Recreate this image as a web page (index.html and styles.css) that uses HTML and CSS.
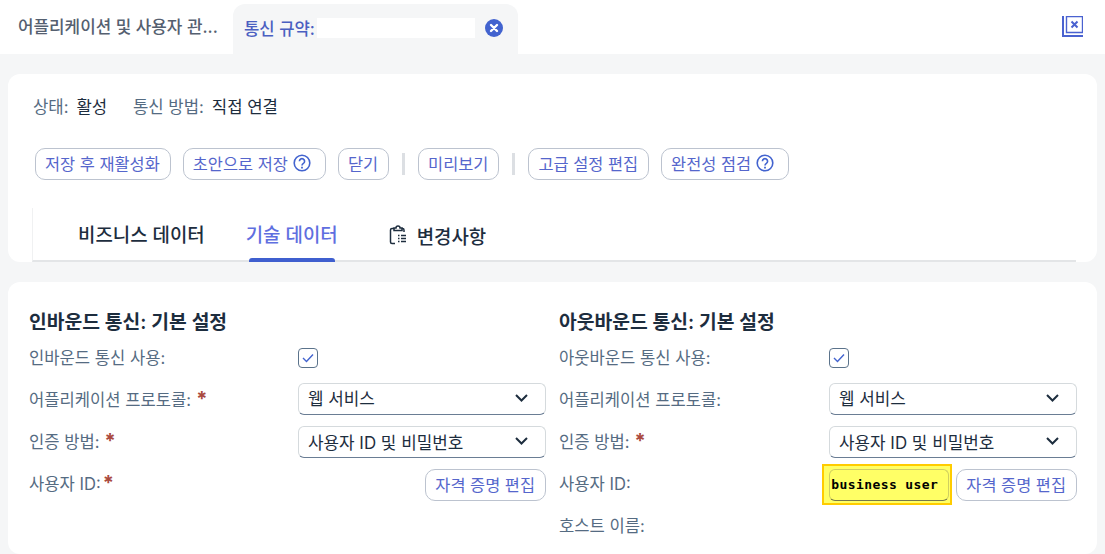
FILE: index.html
```html
<!DOCTYPE html>
<html lang="ko">
  <head>
    <meta charset="utf-8">
    <title>통신 규약</title>
    <link rel="stylesheet" href="styles.css">
  </head>
  <body>
    <div class="topbar">
      <div class="crumb">어플리케이션 및 사용자 관...</div>
      <div class="doc-tab">
        <span class="doc-title">통신 규약:</span>
        <span class="doc-name"></span>
        <svg class="doc-close" width="18" height="18" viewBox="0 0 18 18">
          <circle cx="9" cy="9" r="9" fill="#4263cf"/>
          <path d="M6 6l6 6M12 6l-6 6" stroke="#fff" stroke-width="2.4" stroke-linecap="round"/>
        </svg>
      </div>
      <svg class="exit-icon" width="21" height="21" viewBox="0 0 21 21" fill="none" stroke="#4a62d0">
        <path d="M1 0v20h20" stroke-width="2"/>
        <path d="M4.500 .5h16v16h-16z" stroke-width="1.400"/>
        <path d="M9.500 5.500l6 6M15.500 5.500l-6 6" stroke-width="2"/>
      </svg>
    </div>

    <div class="content">
      <div class="card head-card">
        <div class="status">
          <span class="key">상태:</span><span class="val">활성</span>
          <span class="key key-second">통신 방법:</span><span class="val">직접 연결</span>
        </div>

        <div class="actions">
          <button class="btn">저장 후 재활성화</button>
          <button class="btn btn-help">초안으로 저장
            <svg width="18" height="18" viewBox="0 0 18 18" fill="none" stroke="#4263cf">
              <circle cx="9" cy="9" r="7.800" stroke-width="1.600"/>
              <path d="M6.400 7.200a2.600 2.600 0 1 1 4 2.200c-.9.6-1.400 1-1.400 2" stroke-width="1.600"/>
              <path d="M9 12.800v1.600" stroke-width="1.800"/>
            </svg>
          </button>
          <button class="btn">닫기</button>
          <span class="sep"></span>
          <button class="btn">미리보기</button>
          <span class="sep"></span>
          <button class="btn">고급 설정 편집</button>
          <button class="btn btn-help">완전성 점검
            <svg width="18" height="18" viewBox="0 0 18 18" fill="none" stroke="#4263cf">
              <circle cx="9" cy="9" r="7.800" stroke-width="1.600"/>
              <path d="M6.400 7.200a2.600 2.600 0 1 1 4 2.200c-.9.6-1.400 1-1.400 2" stroke-width="1.600"/>
              <path d="M9 12.800v1.600" stroke-width="1.800"/>
            </svg>
          </button>
        </div>

        <div class="tabs">
          <div class="tab">비즈니스 데이터</div>
          <div class="tab active">기술 데이터</div>
          <div class="tab tab-icon">
            <svg width="18" height="20" viewBox="0 0 18 20" fill="none" stroke="#1d2d3e" stroke-width="1.500">
              <path d="M5 3.500H3a1.500 1.500 0 0 0-1.500 1.500v12A1.500 1.500 0 0 0 3 18.500h3"/>
              <path d="M5 5.500V3h2a2 2 0 0 1 4 0h2v2.500z"/>
              <path d="M13 3.500h.5A1.500 1.500 0 0 1 15 5v2"/>
              <path d="M9 10.500h1.500M9 13.500h1.500M9 16.500h1.500M12 10.500h5M12 13.500h5M12 16.500h5" stroke-width="1.700"/>
            </svg>
            변경사항
          </div>
        </div>
      </div>

      <div class="card form-card">
        <div class="col">
          <h3>인바운드 통신: 기본 설정</h3>
          <div class="row">
            <label>인바운드 통신 사용:</label>
            <span class="check">
              <svg width="12" height="10" viewBox="0 0 12 10" fill="none" stroke="#4263cf" stroke-width="1.400"><path d="M1 5l3.500 3.500L11 1.500"/></svg>
            </span>
          </div>
          <div class="row">
            <label>어플리케이션 프로토콜:<span class="req">*</span></label>
            <div class="select select-first">웹 서비스
              <svg width="13" height="8" viewBox="0 0 13 8" fill="none" stroke="#1d2d3e" stroke-width="2"><path d="M1 1l5.500 5.500L12 1"/></svg>
            </div>
          </div>
          <div class="row">
            <label>인증 방법:<span class="req">*</span></label>
            <div class="select">사용자 ID 및 비밀번호
              <svg width="13" height="8" viewBox="0 0 13 8" fill="none" stroke="#1d2d3e" stroke-width="2"><path d="M1 1l5.500 5.500L12 1"/></svg>
            </div>
          </div>
          <div class="row">
            <label>사용자 ID:<span class="req req-tight">*</span></label>
            <div class="cred"><button class="btn">자격 증명 편집</button></div>
          </div>
        </div>

        <div class="col">
          <h3>아웃바운드 통신: 기본 설정</h3>
          <div class="row">
            <label>아웃바운드 통신 사용:</label>
            <span class="check">
              <svg width="12" height="10" viewBox="0 0 12 10" fill="none" stroke="#4263cf" stroke-width="1.400"><path d="M1 5l3.500 3.500L11 1.500"/></svg>
            </span>
          </div>
          <div class="row">
            <label>어플리케이션 프로토콜:</label>
            <div class="select select-first">웹 서비스
              <svg width="13" height="8" viewBox="0 0 13 8" fill="none" stroke="#1d2d3e" stroke-width="2"><path d="M1 1l5.500 5.500L12 1"/></svg>
            </div>
          </div>
          <div class="row">
            <label>인증 방법:<span class="req">*</span></label>
            <div class="select">사용자 ID 및 비밀번호
              <svg width="13" height="8" viewBox="0 0 13 8" fill="none" stroke="#1d2d3e" stroke-width="2"><path d="M1 1l5.500 5.500L12 1"/></svg>
            </div>
          </div>
          <div class="row">
            <label>사용자 ID:</label>
            <div class="cred">
              <div class="marked"><div class="user-input">business user</div></div>
              <button class="btn">자격 증명 편집</button>
            </div>
          </div>
          <div class="row">
            <label>호스트 이름:</label>
          </div>
        </div>
      </div>
    </div>
  </body>
</html>
```

FILE: styles.css
```css
* {
  box-sizing: border-box;
}

html,
body {
  height: 100%;
}

body {
  margin: 0;
  overflow: hidden;
  background: #f5f6f7;
  color: #1d2d3e;
  font-family: Inter, "Noto Sans CJK KR", sans-serif;
  font-size: 16.5px;
}

.topbar {
  height: 54px;
  background: #fff;
  display: flex;
  align-items: flex-end;
}

.crumb {
  width: 233px;
  height: 50px;
  padding-left: 18px;
  line-height: 47px;
  font-size: 16.9px;
  font-weight: 500;
  color: #556070;
  white-space: nowrap;
}

.doc-tab {
  width: 285px;
  height: 50px;
  padding: 0 15px 0 11px;
  display: flex;
  align-items: center;
  background: #f5f6f7;
  border-radius: 12px 12px 0 0;
}

.doc-title {
  width: 73px;
  padding-bottom: 3px;
  font-size: 16.7px;
  font-weight: 500;
  color: #4a5fc1;
  white-space: nowrap;
}

.doc-name {
  width: 158px;
  height: 20px;
  margin-bottom: 3px;
  background: #fff;
}

.doc-close {
  margin: 0 0 2px 10px;
}

.exit-icon {
  margin: 0 22px 17px auto;
}

.content {
  padding: 20px 8px 0;
}

.card {
  background: #fff;
  border-radius: 12px;
}

.head-card {
  height: 188px;
  padding: 20px 21px 0 25px;
  overflow: hidden;
}

.status {
  height: 26px;
  line-height: 27px;
  font-size: 16.7px;
  white-space: nowrap;
}

.key {
  color: #556b82;
  margin-right: 8px;
}

.key-second {
  margin-left: 21px;
}

.val {
  color: #1d2d3e;
}

.actions {
  margin-top: 28px;
  margin-left: 2px;
  display: flex;
  align-items: center;
  gap: 12px;
}

.btn {
  height: 32px;
  padding: 0 10px 2px 9px;
  display: inline-flex;
  align-items: center;
  background: #fff;
  border: 1px solid #bcc3cf;
  border-radius: 10px;
  color: #5566cc;
  font-family: inherit;
  font-size: 16.4px;
  white-space: nowrap;
}

.btn-help {
  gap: 5px;
  padding-right: 14px;
}

.sep {
  width: 3px;
  height: 22px;
  margin: 0 1px;
  background: #dcdfe3;
}

.tabs {
  height: 54px;
  margin-top: 28px;
  margin-left: -1px;
  padding-left: 45px;
  display: flex;
  gap: 41px;
  border-left: 1px solid #f0f1f2;
  border-bottom: 2px solid #e3e5e7;
}

.tab {
  height: 52px;
  padding-top: 2px;
  line-height: 52px;
  font-size: 18.9px;
  font-weight: 500;
  color: #1d2d3e;
  position: relative;
}

.tab.active {
  color: #5f6fe0;
}

.tab.active::after {
  content: "";
  position: absolute;
  left: 3px;
  right: 3px;
  bottom: -2px;
  height: 4px;
  background: #3f5fcf;
  border-radius: 3px 3px 0 0;
}

.tab-icon {
  margin-left: 10px;
  display: flex;
  align-items: center;
  gap: 10px;
  line-height: normal;
}

.form-card {
  margin-top: 20px;
  height: 272px;
  padding: 24px 20px 0 21px;
  display: grid;
  grid-template-columns: 517px 518px;
  column-gap: 13px;
}

h3 {
  margin: 0;
  height: 31px;
  line-height: 32px;
  font-size: 19.3px;
  font-weight: 600;
  color: #1d2d3e;
}

.row {
  height: 42px;
  display: grid;
  grid-template-columns: 269px 1fr;
  align-items: center;
}

.col:last-child .row {
  grid-template-columns: 270px 1fr;
}

label {
  padding-bottom: 2px;
  color: #556b82;
  font-size: 16.6px;
  white-space: nowrap;
}

.req {
  margin-left: 5px;
  color: #aa4a3e;
  font-size: 20px;
  font-weight: 700;
  line-height: 15px;
}

.req-tight {
  margin-left: 2px;
}

.check {
  width: 20px;
  height: 20px;
  display: flex;
  align-items: center;
  justify-content: center;
  background: #fff;
  border: 1px solid #5b738b;
  border-radius: 4px;
}

.select {
  height: 32px;
  padding: 0 17px 2px 9px;
  display: flex;
  align-items: center;
  justify-content: space-between;
  background: #fff;
  border: 1px solid #d5dadd;
  border-bottom: 1px solid #6a7d94;
  border-radius: 6px;
  font-size: 16.9px;
  color: #1d2d3e;
}

.select-first {
  margin-top: -3px;
}

.cred {
  margin-top: 2px;
  display: flex;
  justify-content: flex-end;
  gap: 7px;
}

.marked {
  position: relative;
  width: 120px;
}

.marked::before {
  content: "";
  position: absolute;
  inset: -5px -3px -4px -7px;
  background: #ffff66;
  border: 2px solid #ffcc00;
}

.user-input {
  position: relative;
  height: 32px;
  padding-left: 1px;
  line-height: 29px;
  background: #ffff66;
  border: 1px solid #cfcf60;
  border-bottom-color: #77794a;
  border-radius: 6px;
  color: #000;
  font-family: "DejaVu Sans Mono", monospace;
  font-size: 13px;
  font-weight: 700;
  letter-spacing: 0.4px;
  white-space: nowrap;
}
```
